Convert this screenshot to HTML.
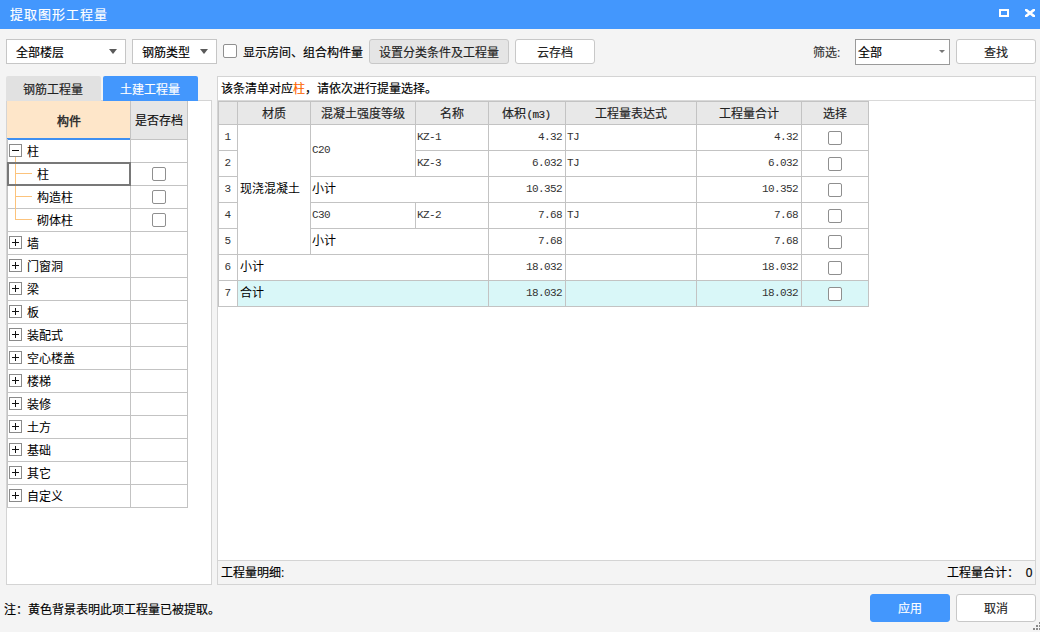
<!DOCTYPE html>
<html lang="zh-CN"><head><meta charset="utf-8">
<style>
*{box-sizing:border-box;margin:0;padding:0}
html,body{width:1040px;height:632px;overflow:hidden}
body{position:relative;background:#f4f4f4;font-family:"Liberation Sans",sans-serif;font-size:12px;color:#000}
.a{position:absolute}
.t{position:absolute;white-space:nowrap;line-height:16px}
.y{-webkit-text-stroke:0.15px currentColor}
.y2{-webkit-text-stroke:0.05px currentColor}
.combo{position:absolute;background:#fff;border:1px solid #c6c6c6;height:25px}
.arrow{position:absolute;width:0;height:0;border-left:4px solid transparent;border-right:4px solid transparent;border-top:5px solid #5a5a5a}
.btn{position:absolute;border:1px solid #c8c8c8;border-radius:3px;background:#fff}
.cb{position:absolute;width:14px;height:14px;border:1px solid #8f8f8f;border-radius:2px;background:#fff}
.mono{font-family:"Liberation Mono",monospace;font-size:11px;letter-spacing:-0.6px;color:#333}
</style></head><body>

<div class="a" style="left:0px;top:0px;width:1040px;height:29px;background:#4397fd;"></div>
<div class="t y" style="left:10px;top:7px;font-size:13px;letter-spacing:1px;color:#fff">提取图形工程量</div>
<div class="a" style="left:999px;top:9px;width:10px;height:8px;border:2px solid #fff"></div>
<svg class="a" style="left:1025px;top:9px" width="10" height="8" viewBox="0 0 10 8"><path d="M0 0 L10 8 M10 0 L0 8" stroke="#fff" stroke-width="2.6"/></svg>
<div class="combo" style="left:6px;top:39px;width:120px"></div>
<div class="t y" style="left:16px;top:45px;">全部楼层</div>
<div class="arrow" style="left:109px;top:49px"></div>
<div class="combo" style="left:132px;top:39px;width:85px"></div>
<div class="t y" style="left:142px;top:45px;">钢筋类型</div>
<div class="arrow" style="left:200px;top:49px"></div>
<div class="cb" style="left:223px;top:44px"></div>
<div class="t y" style="left:243px;top:45px;">显示房间、组合构件量</div>
<div class="btn" style="left:369px;top:39px;width:140px;height:25px;background:#e5e5e5"></div>
<div class="t y" style="left:379px;top:45px;color:#222">设置分类条件及工程量</div>
<div class="btn" style="left:515px;top:39px;width:80px;height:25px"></div>
<div class="t y" style="left:537px;top:45px;color:#222">云存档</div>
<div class="t y" style="left:813px;top:45px;color:#333">筛选:</div>
<div class="combo" style="left:855px;top:39px;width:95px;height:26px;border-color:#9a9a9a"></div>
<div class="t y" style="left:858px;top:45px;">全部</div>
<div class="arrow" style="left:939px;top:50px;border-left-width:3px;border-right-width:3px;border-top-width:3px;border-top-color:#777"></div>
<div class="btn" style="left:956px;top:39px;width:80px;height:25px"></div>
<div class="t y" style="left:984px;top:45px;color:#222">查找</div>
<div class="a" style="left:6px;top:100px;width:206px;height:485px;background:#fff;border:1px solid #d4d4d4"></div>
<div class="a" style="left:6px;top:76px;width:95px;height:25px;background:#e1e1e1;border-radius:2px 2px 0 0"></div>
<div class="t y" style="left:23px;top:82px;color:#222">钢筋工程量</div>
<div class="a" style="left:103px;top:76px;width:95px;height:25px;background:#4397fd;border-radius:2px 2px 0 0"></div>
<div class="t y" style="left:120px;top:82px;color:#fff">土建工程量</div>
<div class="a" style="left:7px;top:101px;width:123px;height:37px;background:#fee6c9;"></div>
<div class="a" style="left:7px;top:138px;width:123px;height:2px;background:#3f8ff0;"></div>
<div class="a" style="left:130px;top:101px;width:57px;height:38px;background:#e6e6e6;border-left:1px solid #c3c3c3"></div>
<div class="t " style="left:57px;top:114px;font-weight:bold;color:#333">构件</div>
<div class="t y" style="left:135px;top:113px;color:#111">是否存档</div>
<div class="a" style="left:7px;top:139px;width:1px;height:369px;background:#c3c3c3;"></div>
<div class="a" style="left:130px;top:139px;width:1px;height:369px;background:#c3c3c3;"></div>
<div class="a" style="left:187px;top:101px;width:1px;height:407px;background:#c3c3c3;"></div>
<div class="a" style="left:9px;top:144px;width:13px;height:13px;border:1px solid #8a8a8a;background:#fff"></div>
<div class="a" style="left:12px;top:150px;width:7px;height:1px;background:#111;"></div>
<div class="t y2" style="left:27px;top:144px;">柱</div>
<div class="a" style="left:7px;top:162px;width:181px;height:1px;background:#c3c3c3;"></div>
<div class="a" style="left:15px;top:173px;width:17px;height:1px;background:#fcc37c;"></div>
<div class="t y2" style="left:37px;top:167px;">柱</div>
<div class="cb" style="left:152px;top:167px"></div>
<div class="a" style="left:7px;top:185px;width:181px;height:1px;background:#c3c3c3;"></div>
<div class="a" style="left:15px;top:196px;width:17px;height:1px;background:#fcc37c;"></div>
<div class="t y2" style="left:37px;top:190px;">构造柱</div>
<div class="cb" style="left:152px;top:190px"></div>
<div class="a" style="left:7px;top:208px;width:181px;height:1px;background:#c3c3c3;"></div>
<div class="a" style="left:15px;top:219px;width:17px;height:1px;background:#fcc37c;"></div>
<div class="t y2" style="left:37px;top:213px;">砌体柱</div>
<div class="cb" style="left:152px;top:213px"></div>
<div class="a" style="left:7px;top:231px;width:181px;height:1px;background:#c3c3c3;"></div>
<div class="a" style="left:9px;top:236px;width:13px;height:13px;border:1px solid #8a8a8a;background:#fff"></div>
<div class="a" style="left:12px;top:242px;width:7px;height:1px;background:#111;"></div>
<div class="a" style="left:15px;top:239px;width:1px;height:7px;background:#111;"></div>
<div class="t y2" style="left:27px;top:236px;">墙</div>
<div class="a" style="left:7px;top:254px;width:181px;height:1px;background:#c3c3c3;"></div>
<div class="a" style="left:9px;top:259px;width:13px;height:13px;border:1px solid #8a8a8a;background:#fff"></div>
<div class="a" style="left:12px;top:265px;width:7px;height:1px;background:#111;"></div>
<div class="a" style="left:15px;top:262px;width:1px;height:7px;background:#111;"></div>
<div class="t y2" style="left:27px;top:259px;">门窗洞</div>
<div class="a" style="left:7px;top:277px;width:181px;height:1px;background:#c3c3c3;"></div>
<div class="a" style="left:9px;top:282px;width:13px;height:13px;border:1px solid #8a8a8a;background:#fff"></div>
<div class="a" style="left:12px;top:288px;width:7px;height:1px;background:#111;"></div>
<div class="a" style="left:15px;top:285px;width:1px;height:7px;background:#111;"></div>
<div class="t y2" style="left:27px;top:282px;">梁</div>
<div class="a" style="left:7px;top:300px;width:181px;height:1px;background:#c3c3c3;"></div>
<div class="a" style="left:9px;top:305px;width:13px;height:13px;border:1px solid #8a8a8a;background:#fff"></div>
<div class="a" style="left:12px;top:311px;width:7px;height:1px;background:#111;"></div>
<div class="a" style="left:15px;top:308px;width:1px;height:7px;background:#111;"></div>
<div class="t y2" style="left:27px;top:305px;">板</div>
<div class="a" style="left:7px;top:323px;width:181px;height:1px;background:#c3c3c3;"></div>
<div class="a" style="left:9px;top:328px;width:13px;height:13px;border:1px solid #8a8a8a;background:#fff"></div>
<div class="a" style="left:12px;top:334px;width:7px;height:1px;background:#111;"></div>
<div class="a" style="left:15px;top:331px;width:1px;height:7px;background:#111;"></div>
<div class="t y2" style="left:27px;top:328px;">装配式</div>
<div class="a" style="left:7px;top:346px;width:181px;height:1px;background:#c3c3c3;"></div>
<div class="a" style="left:9px;top:351px;width:13px;height:13px;border:1px solid #8a8a8a;background:#fff"></div>
<div class="a" style="left:12px;top:357px;width:7px;height:1px;background:#111;"></div>
<div class="a" style="left:15px;top:354px;width:1px;height:7px;background:#111;"></div>
<div class="t y2" style="left:27px;top:351px;">空心楼盖</div>
<div class="a" style="left:7px;top:369px;width:181px;height:1px;background:#c3c3c3;"></div>
<div class="a" style="left:9px;top:374px;width:13px;height:13px;border:1px solid #8a8a8a;background:#fff"></div>
<div class="a" style="left:12px;top:380px;width:7px;height:1px;background:#111;"></div>
<div class="a" style="left:15px;top:377px;width:1px;height:7px;background:#111;"></div>
<div class="t y2" style="left:27px;top:374px;">楼梯</div>
<div class="a" style="left:7px;top:392px;width:181px;height:1px;background:#c3c3c3;"></div>
<div class="a" style="left:9px;top:397px;width:13px;height:13px;border:1px solid #8a8a8a;background:#fff"></div>
<div class="a" style="left:12px;top:403px;width:7px;height:1px;background:#111;"></div>
<div class="a" style="left:15px;top:400px;width:1px;height:7px;background:#111;"></div>
<div class="t y2" style="left:27px;top:397px;">装修</div>
<div class="a" style="left:7px;top:415px;width:181px;height:1px;background:#c3c3c3;"></div>
<div class="a" style="left:9px;top:420px;width:13px;height:13px;border:1px solid #8a8a8a;background:#fff"></div>
<div class="a" style="left:12px;top:426px;width:7px;height:1px;background:#111;"></div>
<div class="a" style="left:15px;top:423px;width:1px;height:7px;background:#111;"></div>
<div class="t y2" style="left:27px;top:420px;">土方</div>
<div class="a" style="left:7px;top:438px;width:181px;height:1px;background:#c3c3c3;"></div>
<div class="a" style="left:9px;top:443px;width:13px;height:13px;border:1px solid #8a8a8a;background:#fff"></div>
<div class="a" style="left:12px;top:449px;width:7px;height:1px;background:#111;"></div>
<div class="a" style="left:15px;top:446px;width:1px;height:7px;background:#111;"></div>
<div class="t y2" style="left:27px;top:443px;">基础</div>
<div class="a" style="left:7px;top:461px;width:181px;height:1px;background:#c3c3c3;"></div>
<div class="a" style="left:9px;top:466px;width:13px;height:13px;border:1px solid #8a8a8a;background:#fff"></div>
<div class="a" style="left:12px;top:472px;width:7px;height:1px;background:#111;"></div>
<div class="a" style="left:15px;top:469px;width:1px;height:7px;background:#111;"></div>
<div class="t y2" style="left:27px;top:466px;">其它</div>
<div class="a" style="left:7px;top:484px;width:181px;height:1px;background:#c3c3c3;"></div>
<div class="a" style="left:9px;top:489px;width:13px;height:13px;border:1px solid #8a8a8a;background:#fff"></div>
<div class="a" style="left:12px;top:495px;width:7px;height:1px;background:#111;"></div>
<div class="a" style="left:15px;top:492px;width:1px;height:7px;background:#111;"></div>
<div class="t y2" style="left:27px;top:489px;">自定义</div>
<div class="a" style="left:7px;top:507px;width:181px;height:1px;background:#c3c3c3;"></div>
<div class="a" style="left:130px;top:139px;width:58px;height:1px;background:#c3c3c3;"></div>
<div class="a" style="left:15px;top:157px;width:1px;height:63px;background:#fcc37c;"></div>
<div class="a" style="left:7px;top:162px;width:124px;height:24px;border:2px solid #787878"></div>
<div class="a" style="left:217px;top:76px;width:819px;height:509px;background:#fff;border:1px solid #d4d4d4"></div>
<div class="t y" style="left:221px;top:81px;">该条清单对应<span style="color:#fc6500">柱</span>，请依次进行提量选择。</div>
<div class="a" style="left:218px;top:100px;width:817px;height:1px;background:#d9d9d9;"></div>
<div class="a" style="left:218px;top:101px;width:650px;height:23px;background:#e8e8e8;"></div>
<div class="t y" style="left:237px;top:106px;width:73px;text-align:center;color:#222">材质</div>
<div class="t y" style="left:310px;top:106px;width:105px;text-align:center;color:#222">混凝土强度等级</div>
<div class="t y" style="left:415px;top:106px;width:73px;text-align:center;color:#222">名称</div>
<div class="t y" style="left:488px;top:106px;width:77px;text-align:center;color:#222">体积<span style="font-family:Liberation Mono;letter-spacing:-0.6px;font-size:11px">(m3)</span></div>
<div class="t y" style="left:565px;top:106px;width:131px;text-align:center;color:#222">工程量表达式</div>
<div class="t y" style="left:696px;top:106px;width:105px;text-align:center;color:#222">工程量合计</div>
<div class="t y" style="left:801px;top:106px;width:67px;text-align:center;color:#222">选择</div>
<div class="a" style="left:237px;top:280px;width:631px;height:26px;background:#d9f7f8;"></div>
<div class="a" style="left:218px;top:101px;width:651px;height:1px;background:#c3c3c3;"></div>
<div class="a" style="left:218px;top:124px;width:651px;height:1px;background:#c3c3c3;"></div>
<div class="a" style="left:218px;top:306px;width:651px;height:1px;background:#c3c3c3;"></div>
<div class="a" style="left:218px;top:150px;width:20px;height:1px;background:#c3c3c3;"></div>
<div class="a" style="left:415px;top:150px;width:454px;height:1px;background:#c3c3c3;"></div>
<div class="a" style="left:218px;top:176px;width:20px;height:1px;background:#c3c3c3;"></div>
<div class="a" style="left:310px;top:176px;width:559px;height:1px;background:#c3c3c3;"></div>
<div class="a" style="left:218px;top:202px;width:20px;height:1px;background:#c3c3c3;"></div>
<div class="a" style="left:310px;top:202px;width:559px;height:1px;background:#c3c3c3;"></div>
<div class="a" style="left:218px;top:228px;width:20px;height:1px;background:#c3c3c3;"></div>
<div class="a" style="left:310px;top:228px;width:559px;height:1px;background:#c3c3c3;"></div>
<div class="a" style="left:218px;top:254px;width:651px;height:1px;background:#c3c3c3;"></div>
<div class="a" style="left:218px;top:280px;width:651px;height:1px;background:#c3c3c3;"></div>
<div class="a" style="left:218px;top:101px;width:1px;height:206px;background:#c3c3c3;"></div>
<div class="a" style="left:237px;top:101px;width:1px;height:206px;background:#c3c3c3;"></div>
<div class="a" style="left:868px;top:101px;width:1px;height:206px;background:#c3c3c3;"></div>
<div class="a" style="left:310px;top:101px;width:1px;height:154px;background:#c3c3c3;"></div>
<div class="a" style="left:415px;top:101px;width:1px;height:76px;background:#c3c3c3;"></div>
<div class="a" style="left:415px;top:202px;width:1px;height:27px;background:#c3c3c3;"></div>
<div class="a" style="left:488px;top:101px;width:1px;height:206px;background:#c3c3c3;"></div>
<div class="a" style="left:565px;top:101px;width:1px;height:206px;background:#c3c3c3;"></div>
<div class="a" style="left:696px;top:101px;width:1px;height:206px;background:#c3c3c3;"></div>
<div class="a" style="left:801px;top:101px;width:1px;height:206px;background:#c3c3c3;"></div>
<div class="t mono" style="left:218px;top:129px;width:19px;text-align:center">1</div>
<div class="t mono" style="left:218px;top:155px;width:19px;text-align:center">2</div>
<div class="t mono" style="left:218px;top:181px;width:19px;text-align:center">3</div>
<div class="t mono" style="left:218px;top:207px;width:19px;text-align:center">4</div>
<div class="t mono" style="left:218px;top:233px;width:19px;text-align:center">5</div>
<div class="t mono" style="left:218px;top:259px;width:19px;text-align:center">6</div>
<div class="t mono" style="left:218px;top:285px;width:19px;text-align:center">7</div>
<div class="t " style="left:240px;top:181px;">现浇混凝土</div>
<div class="t mono" style="left:312px;top:142px;">C20</div>
<div class="t mono" style="left:417px;top:129px;">KZ-1</div>
<div class="t mono" style="left:417px;top:155px;">KZ-3</div>
<div class="t " style="left:312px;top:181px;">小计</div>
<div class="t mono" style="left:312px;top:207px;">C30</div>
<div class="t mono" style="left:417px;top:207px;">KZ-2</div>
<div class="t " style="left:312px;top:233px;">小计</div>
<div class="t " style="left:240px;top:259px;">小计</div>
<div class="t " style="left:240px;top:285px;">合计</div>
<div class="t mono" style="left:482px;top:129px;width:80px;text-align:right">4.32</div>
<div class="t mono" style="left:718px;top:129px;width:80px;text-align:right">4.32</div>
<div class="t mono" style="left:567px;top:129px;">TJ</div>
<div class="cb" style="left:828px;top:131px"></div>
<div class="t mono" style="left:482px;top:155px;width:80px;text-align:right">6.032</div>
<div class="t mono" style="left:718px;top:155px;width:80px;text-align:right">6.032</div>
<div class="t mono" style="left:567px;top:155px;">TJ</div>
<div class="cb" style="left:828px;top:157px"></div>
<div class="t mono" style="left:482px;top:181px;width:80px;text-align:right">10.352</div>
<div class="t mono" style="left:718px;top:181px;width:80px;text-align:right">10.352</div>
<div class="cb" style="left:828px;top:183px"></div>
<div class="t mono" style="left:482px;top:207px;width:80px;text-align:right">7.68</div>
<div class="t mono" style="left:718px;top:207px;width:80px;text-align:right">7.68</div>
<div class="t mono" style="left:567px;top:207px;">TJ</div>
<div class="cb" style="left:828px;top:209px"></div>
<div class="t mono" style="left:482px;top:233px;width:80px;text-align:right">7.68</div>
<div class="t mono" style="left:718px;top:233px;width:80px;text-align:right">7.68</div>
<div class="cb" style="left:828px;top:235px"></div>
<div class="t mono" style="left:482px;top:259px;width:80px;text-align:right">18.032</div>
<div class="t mono" style="left:718px;top:259px;width:80px;text-align:right">18.032</div>
<div class="cb" style="left:828px;top:261px"></div>
<div class="t mono" style="left:482px;top:285px;width:80px;text-align:right">18.032</div>
<div class="t mono" style="left:718px;top:285px;width:80px;text-align:right">18.032</div>
<div class="cb" style="left:828px;top:287px"></div>
<div class="a" style="left:218px;top:560px;width:817px;height:24px;background:#f4f4f4;border-top:1px solid #d4d4d4"></div>
<div class="t y" style="left:221px;top:565px;">工程量明细:</div>
<div class="t y" style="left:947px;top:565px;">工程量合计：&nbsp; 0</div>
<div class="t y" style="left:4px;top:602px;">注：黄色背景表明此项工程量已被提取。</div>
<div class="btn" style="left:870px;top:594px;width:80px;height:28px;background:#4397fd;border-color:#4397fd"></div>
<div class="t y" style="left:898px;top:601px;color:#fff">应用</div>
<div class="btn" style="left:956px;top:594px;width:80px;height:28px"></div>
<div class="t y" style="left:984px;top:601px;color:#222">取消</div>
<div class="a" style="left:1039px;top:622px;width:2px;height:2px;background:#8a8a8a;"></div>
<div class="a" style="left:1036px;top:625px;width:2px;height:2px;background:#8a8a8a;"></div>
<div class="a" style="left:1039px;top:625px;width:2px;height:2px;background:#8a8a8a;"></div>
<div class="a" style="left:1033px;top:628px;width:2px;height:2px;background:#8a8a8a;"></div>
<div class="a" style="left:1036px;top:628px;width:2px;height:2px;background:#8a8a8a;"></div>
<div class="a" style="left:1039px;top:628px;width:2px;height:2px;background:#8a8a8a;"></div>
</body></html>
